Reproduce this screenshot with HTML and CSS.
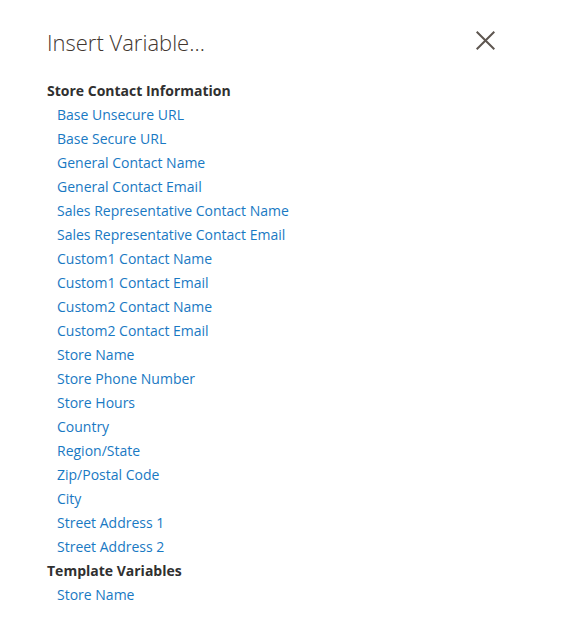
FILE: index.html
```html
<!DOCTYPE html>
<html>
<head>
<meta charset="utf-8">
<link rel="stylesheet" href="styles.css">
</head>
<body>
<div class="modal">
  <header class="modal-header">
    <h1 class="modal-title">Insert Variable...</h1>
    <button class="close" aria-label="Close">
      <svg width="19" height="19" viewBox="0 0 19 19"><path d="M0.7 0.7L18.3 18.3M18.3 0.7L0.7 18.3" stroke="#5e5650" stroke-width="2" fill="none"/></svg>
    </button>
  </header>
  <div class="group">
    <div class="group-title">Store Contact Information</div>
    <a class="var" href="#">Base Unsecure URL</a>
    <a class="var" href="#">Base Secure URL</a>
    <a class="var" href="#">General Contact Name</a>
    <a class="var" href="#">General Contact Email</a>
    <a class="var" href="#">Sales Representative Contact Name</a>
    <a class="var" href="#">Sales Representative Contact Email</a>
    <a class="var" href="#">Custom1 Contact Name</a>
    <a class="var" href="#">Custom1 Contact Email</a>
    <a class="var" href="#">Custom2 Contact Name</a>
    <a class="var" href="#">Custom2 Contact Email</a>
    <a class="var" href="#">Store Name</a>
    <a class="var" href="#">Store Phone Number</a>
    <a class="var" href="#">Store Hours</a>
    <a class="var" href="#">Country</a>
    <a class="var" href="#">Region/State</a>
    <a class="var" href="#">Zip/Postal Code</a>
    <a class="var" href="#">City</a>
    <a class="var" href="#">Street Address 1</a>
    <a class="var" href="#">Street Address 2</a>
  </div>
  <div class="group">
    <div class="group-title">Template Variables</div>
    <a class="var" href="#">Store Name</a>
  </div>
</div>
</body>
</html>
```
FILE: styles.css
```css
html, body {
  margin: 0;
  padding: 0;
  background: #ffffff;
}
body {
  font-family: "Open Sans", "Liberation Sans", sans-serif;
  color: #303030;
}
.modal {
  padding: 25px 0 0 47px;
  width: 448px;
}
.modal-header {
  display: flex;
  justify-content: space-between;
  align-items: center;
  height: 34px;
  margin-bottom: 20px;
}
.modal-title {
  margin: 0;
  font-size: 22px;
  font-weight: 300;
  color: #41362f;
  line-height: 34px;
}
.close {
  border: 0;
  background: none;
  padding: 0;
  width: 19px;
  height: 19px;
  margin-top: -4px;
  display: flex;
  cursor: pointer;
}
.group {
  display: flex;
  flex-direction: column;
  align-items: flex-start;
}
.group-title {
  font-size: 14px;
  font-weight: 700;
  line-height: 24px;
  color: #303030;
}
.var {
  font-size: 14px;
  line-height: 24px;
  color: #1979c3;
  text-decoration: none;
  margin-left: 10px;
}
```
